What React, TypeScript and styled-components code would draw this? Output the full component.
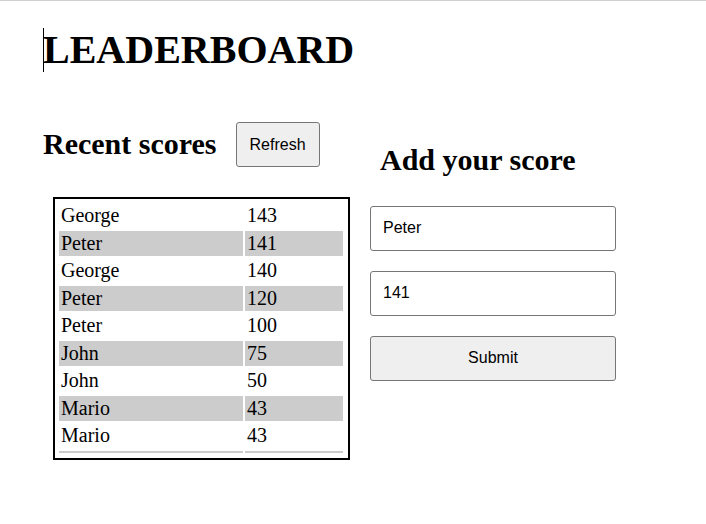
import React from "react";
import styled, { createGlobalStyle } from "styled-components";

const GlobalStyle = createGlobalStyle`
  html, body { margin: 0; padding: 0; background: #ffffff; }
  body { font-family: "Liberation Serif", "Times New Roman", serif; color: #000; }
`;

const Page = styled.div`
  border-top: 1px solid #d0d0d0;
  padding: 0 0 40px 44px;
  min-height: 480px;
`;

const Title = styled.h1`
  position: relative;
  margin: 26px 0 0 -1px;
  font-size: 40px;
  line-height: 46px;
  font-weight: bold;
`;

const Caret = styled.span`
  position: absolute;
  left: 0;
  top: 1px;
  width: 1px;
  height: 44px;
  background: #000;
`;

const Main = styled.div`
  display: flex;
  align-items: flex-start;
  gap: 20px;
  margin-top: 49px;
`;

const LeftColumn = styled.section`
  display: flex;
  flex-direction: column;
`;

const HeaderRow = styled.div`
  display: flex;
  align-items: center;
  gap: 19px;
  height: 45px;
`;

const Heading = styled.h2<{ $indent?: number; $top?: number }>`
  margin: ${(p) => p.$top ?? 0}px 0 0 ${(p) => p.$indent ?? -1}px;
  font-size: 30px;
  line-height: 34.5px;
  font-weight: bold;
`;

const GrayButton = styled.button<{ $wide?: boolean }>`
  box-sizing: border-box;
  height: 45px;
  width: ${(p) => (p.$wide ? "246px" : "84px")};
  padding: 0;
  background: #efefef;
  border: 1px solid #767676;
  border-radius: 3px;
  font-family: "Liberation Sans", Arial, sans-serif;
  font-size: 16px;
  color: #000;
`;

const ScoreTable = styled.table`
  margin: 30px 0 0 9px;
  border: 2px solid #000;
  padding: 2px 3px 3px 2px;
  border-spacing: 2px;
  font-size: 20px;
`;

const Row = styled.tr<{ $shaded: boolean }>`
  background: ${(p) => (p.$shaded ? "#cccccc" : "transparent")};
`;

const Cell = styled.td<{ $width: number }>`
  width: ${(p) => p.$width}px;
  padding: 1px 2px;
  line-height: 23.5px;
  vertical-align: middle;
`;

const Form = styled.form`
  display: flex;
  flex-direction: column;
`;

const Fields = styled.div`
  display: flex;
  flex-direction: column;
  gap: 20px;
  margin-top: 28px;
`;

const Field = styled.input`
  box-sizing: border-box;
  width: 246px;
  height: 45px;
  padding: 0 12px;
  border: 1px solid #767676;
  border-radius: 3px;
  font-family: "Liberation Sans", Arial, sans-serif;
  font-size: 16px;
  color: #000;
  background: #fff;
  outline: none;
`;

const scores: Array<[string, string]> = [
  ["George", "143"],
  ["Peter", "141"],
  ["George", "140"],
  ["Peter", "120"],
  ["Peter", "100"],
  ["John", "75"],
  ["John", "50"],
  ["Mario", "43"],
  ["Mario", "43"],
  ["", ""],
];

export default function App() {
  return (
    <>
      <GlobalStyle />
      <Page>
        <Title>
          <Caret />
          LEADERBOARD
        </Title>
        <Main>
          <LeftColumn>
            <HeaderRow>
              <Heading>Recent scores</Heading>
              <GrayButton type="button">Refresh</GrayButton>
            </HeaderRow>
            <ScoreTable>
              <tbody>
                {scores.map(([name, score], i) => (
                  <Row key={i} $shaded={i % 2 === 1}>
                    <Cell $width={180}>{name}</Cell>
                    <Cell $width={94}>{score}</Cell>
                  </Row>
                ))}
              </tbody>
            </ScoreTable>
          </LeftColumn>
          <Form onSubmit={(e) => e.preventDefault()}>
            <Heading $indent={10} $top={21}>
              Add your score
            </Heading>
            <Fields>
              <Field type="text" defaultValue="Peter" />
              <Field type="text" defaultValue="141" />
              <GrayButton type="submit" $wide>
                Submit
              </GrayButton>
            </Fields>
          </Form>
        </Main>
      </Page>
    </>
  );
}
